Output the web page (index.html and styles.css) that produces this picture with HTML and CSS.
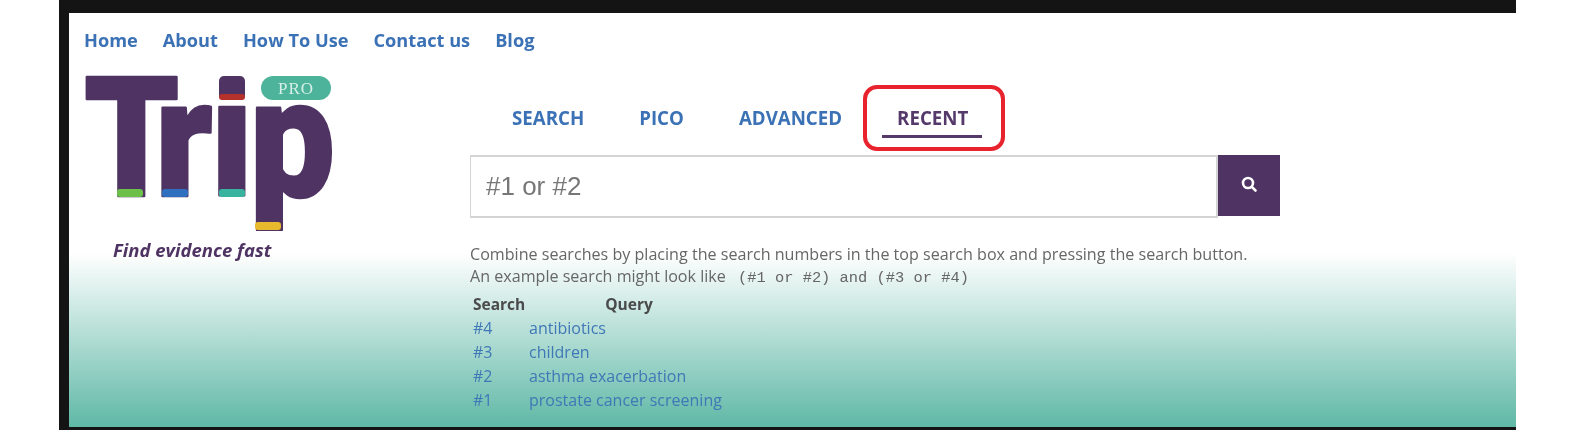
FILE: index.html
```html
<!DOCTYPE html>
<html lang="en">
<head>
    <meta charset="UTF-8">
    <meta name="viewport" content="width=device-width, initial-scale=1.0">
    <title>Trip Pro - Recent searches</title>
    <link rel="stylesheet" href="styles.css">
</head>
<body>

    <div class="frame">
        <div class="page">
            <nav class="top-nav">
                <a href="#">Home</a>
                <a href="#">About</a>
                <a href="#">How To Use</a>
                <a href="#">Contact us</a>
                <a href="#">Blog</a>
            </nav>

            <div class="main">
                <div class="brand">
                    <svg class="logo" width="250" height="156" viewBox="85 75 250 156">
                        <text class="logo-word" transform="translate(85 0) scale(.9 1)" x="-1 78 140 183" y="196">Trip</text>
                        <rect x="214" y="70" width="36" height="34" fill="#fff"/>
                        <rect class="logo-purple" x="219" y="76" width="26" height="24" rx="5"/>
                        <rect x="219" y="94" width="26" height="6" rx="3" fill="#b5322c"/>
                        <rect x="117" y="189" width="26" height="8" rx="3" fill="#6cc04a"/>
                        <rect x="162" y="189" width="26" height="8" rx="3" fill="#2f6fc0"/>
                        <rect x="219" y="189" width="26" height="8" rx="3" fill="#37b3a0"/>
                        <rect x="255" y="222" width="26" height="8" rx="3" fill="#e8b92c"/>
                        <rect x="261" y="76" width="70" height="24" rx="12" fill="#4db39a"/>
                        <text class="logo-pro" x="296" y="94" text-anchor="middle">PRO</text>
                    </svg>
                    <p class="tagline">Find evidence fast</p>
                </div>

                <div class="content">
                    <div class="tabs">
                        <a href="#">SEARCH</a>
                        <a href="#">PICO</a>
                        <a href="#">ADVANCED</a>
                        <a href="#" class="active">RECENT</a>
                        <span class="highlight"></span>
                    </div>

                    <form class="search-form">
                        <input type="text" value="#1 or #2">
                        <button type="button" aria-label="Search">
                            <svg width="18" height="18" viewBox="0 0 18 18">
                                <circle cx="8" cy="8" r="5" fill="none" stroke="#fff" stroke-width="2.6"/>
                                <line x1="11.8" y1="11.8" x2="15.5" y2="15.5" stroke="#fff" stroke-width="2.6" stroke-linecap="round"/>
                            </svg>
                        </button>
                    </form>

                    <p class="help">Combine searches by placing the search numbers in the top search box and pressing the search button.<br>
                    An example search might look like <code>(#1 or #2) and (#3 or #4)</code></p>

                    <div class="history-head">
                        <span>Search</span>
                        <span>Query</span>
                    </div>
                    <table class="history">
                        <tbody>
                            <tr><td><a href="#">#4</a></td><td><a href="#">antibiotics</a></td></tr>
                            <tr><td><a href="#">#3</a></td><td><a href="#">children</a></td></tr>
                            <tr><td><a href="#">#2</a></td><td><a href="#">asthma exacerbation</a></td></tr>
                            <tr><td><a href="#">#1</a></td><td><a href="#">prostate cancer screening</a></td></tr>
                        </tbody>
                    </table>
                </div>
            </div>
        </div>
    </div>

</body>
</html>
```

FILE: styles.css
```css
html, body {
    height: 430px;
    overflow: hidden;
}
body {
    font-family: "Open Sans", Arial, sans-serif;
    background-color: #fff;
    margin: 0;
}
a {
    text-decoration: none;
}
.frame {
    box-sizing: border-box;
    width: 1457px;
    height: 430px;
    margin-left: 59px;
    padding: 13px 0 3px 10px;
    background-color: #141414;
}
.page {
    box-sizing: border-box;
    height: 414px;
    padding: 14px 0 0 15px;
    background: linear-gradient(to bottom, #fff 58%, #5fb8a6 100%);
    filter: blur(0.6px);
}
.top-nav {
    display: flex;
    gap: 25px;
    height: 26px;
    line-height: 26px;
    font-size: 18.2px;
    font-weight: 700;
}
.top-nav a {
    color: #3b71b5;
}
.main {
    display: flex;
    margin-top: 22px;
}
.brand {
    width: 386px;
    flex-shrink: 0;
}
.logo {
    display: block;
    margin-left: 1px;
}
.logo-word {
    font-family: Roboto, sans-serif;
    font-weight: 900;
    font-size: 168px;
    fill: #4f3463;
    stroke: #4f3463;
    stroke-width: 2.5px;
    stroke-linejoin: round;
}
.logo-purple {
    fill: #4f3463;
}
.logo-pro {
    font-family: "Liberation Serif", serif;
    font-size: 17px;
    letter-spacing: 1px;
    fill: #d6efe8;
}
.tagline {
    margin: 7px 0 0 29px;
    font-size: 18.5px;
    line-height: 24px;
    font-weight: 700;
    font-style: italic;
    color: #4f3463;
}
.content {
    width: 810px;
}
.tabs {
    position: relative;
    display: flex;
    height: 50px;
    padding-left: 42px;
    margin-top: 30px;
    font-size: 18.7px;
    font-weight: 700;
    line-height: 26px;
}
.tabs a {
    color: #3b71b5;
    margin-right: 55px;
}
.tabs a.active {
    color: #55396b;
    position: relative;
}
.tabs a.active::after {
    content: "";
    position: absolute;
    left: -15px;
    right: -14px;
    top: 30px;
    height: 3px;
    background-color: #55396b;
}
.highlight {
    position: absolute;
    left: 393px;
    top: -20px;
    width: 134px;
    height: 58px;
    border: 4px solid #e8232e;
    border-radius: 14px;
}
.search-form {
    display: flex;
    height: 62px;
}
.search-form input {
    box-sizing: border-box;
    width: 748px;
    height: 63px;
    padding: 0 15px;
    border: 2px solid #d4d4d4;
    border-left-width: 1px;
    font-family: "Liberation Sans", Arial, sans-serif;
    font-size: 26px;
    color: #777;
    outline: none;
}
.search-form button {
    display: flex;
    align-items: center;
    justify-content: center;
    width: 62px;
    height: 61px;
    padding: 0 0 4px;
    border: none;
    background-color: #4f3463;
}
.help {
    margin: 26px 0 0;
    font-size: 16.1px;
    line-height: 22px;
    color: #666;
}
.help code {
    margin-left: 8px;
    font-family: "Liberation Mono", monospace;
    font-size: 15.4px;
}
.history-head {
    display: flex;
    gap: 80px;
    height: 24px;
    margin-top: 3px;
    padding-left: 3px;
    line-height: 24px;
    font-size: 15.5px;
    font-weight: 700;
    color: #4a4a4a;
}
.history {
    border-collapse: collapse;
    font-size: 16px;
}
.history td {
    padding: 0 0 0 3px;
    height: 24px;
}
.history td:first-child {
    width: 53px;
}
.history a {
    color: #3f78b6;
}
```
